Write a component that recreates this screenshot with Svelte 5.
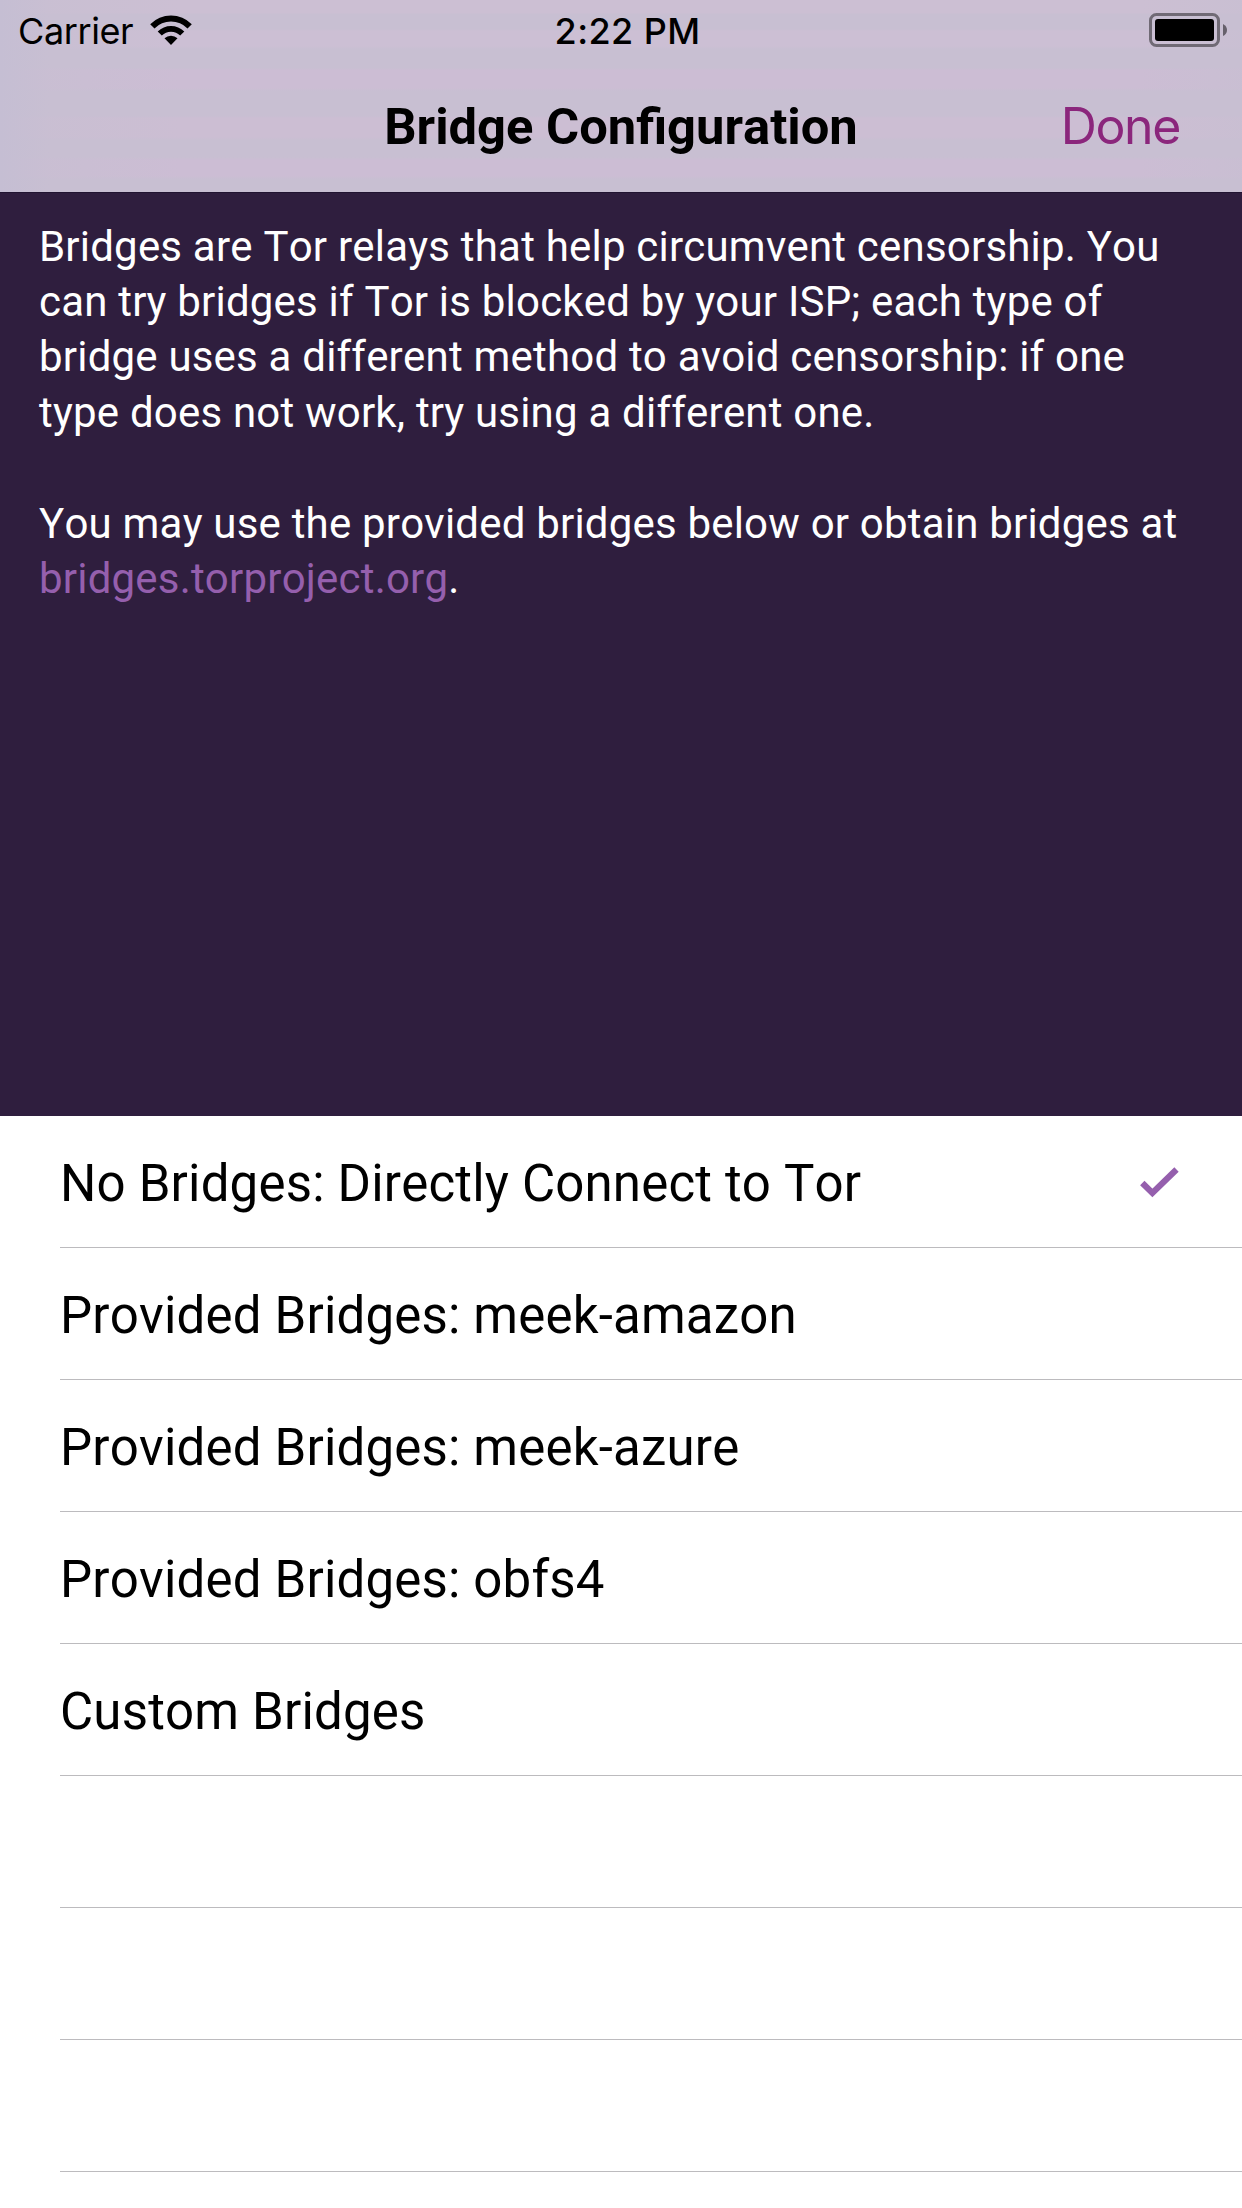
<script>
  const rows = ['No Bridges: Directly Connect to Tor', 'Provided Bridges: meek-amazon', 'Provided Bridges: meek-azure', 'Provided Bridges: obfs4', 'Custom Bridges', '', '', '', ''];
  const intro = ['Bridges are Tor relays that help circumvent censorship. You', 'can try bridges if Tor is blocked by your ISP; each type of', 'bridge uses a different method to avoid censorship: if one', 'type does not work, try using a different one.'];
</script>

<div class="screen">
  <header>
    <div class="status">
      <div class="left">
        <span class="carrier">Carrier</span>
        <svg class="wifi" width="42" height="30" viewBox="0 0 42 30"><path d="M21 30 14.5 23.3A9.4 9.4 0 0 1 27.5 23.3ZM7.7 16.4A19 19 0 0 1 34.3 16.4L30.2 20.6A13 13 0 0 0 11.8 20.6ZM.2 9.2A29.2 29.2 0 0 1 41.8 9.2L37.5 13.5A23 23 0 0 0 4.5 13.5Z" /></svg>
      </div>
      <span class="time">2:22 PM</span>
      <svg class="battery" width="78" height="34" viewBox="0 0 78 34"><rect x="1.5" y="1.5" width="68" height="31" rx="6" fill="none" stroke="#706a75" stroke-width="3" /><rect x="6" y="6" width="59" height="22" rx="3" /><path d="M74 11Q78 13 78 17T74 23Z" fill="#66606b" /></svg>
    </div>
    <div class="nav"><h1>Bridge Configuration</h1><span class="done">Done</span></div>
  </header>
  <section>
    {#each intro as line}<p>{line}</p>{/each}
    <p class="gap">You may use the provided bridges below or obtain bridges at</p>
    <p><a href="#bridges">bridges.torproject.org</a>.</p>
  </section>
  <ul>
    {#each rows as row, i}
      <li><span>{row}</span>{#if i === 0}<svg width="40" height="32" viewBox="0 0 40 32"><path d="M3.3 17 13.4 27 37.5 3.5" fill="none" stroke="#955fad" stroke-width="6.2" /></svg>{/if}</li>
    {/each}
  </ul>
</div>

<style>
  .screen { width: 1242px; height: 2208px; overflow: hidden; background: #fff; font-family: Roboto, sans-serif; }
  header {
    height: 192px;
    background:
      linear-gradient(90deg, #c5bed3 0, #c8bfd2b0 50px, transparent 180px, transparent 1140px, #c8bfd2b0 1242px),
      linear-gradient(#ccbfd3 0 13px, #c8bfd2 14px 29px, #ccbfd4 31px 46px, #c8bfd2 49px 68px, #ccbdd4 70px 88px, #c8bfd2 91px 116px, #ccbed3 118px 137px, #c8bfd2 140px 157px, #ccbdd4 160px 176px, #c8bfd2 179px);
    font-family: Inter, sans-serif;
  }
  .status { height: 60px; display: grid; grid-template-columns: 1fr auto 1fr; align-items: center; padding: 0 15px 0 18px; font-size: 36px; }
  .left { display: flex; align-items: center; gap: 17px; }
  .carrier { letter-spacing: -.4px; padding-top: 2px; }
  .time { font-weight: 500; letter-spacing: .4px; padding: 2px 0 0 10px; }
  .battery { justify-self: end; }
  .nav { height: 132px; display: grid; grid-template-columns: 1fr auto 1fr; align-items: center; padding: 0 62px; }
  h1 { grid-column: 2; margin: 0; font: 700 50.7px Roboto, sans-serif; font-kerning: none; }
  .done { justify-self: end; color: #8b267c; font-size: 50px; letter-spacing: -1.4px; }
  section { box-sizing: border-box; height: 924px; border-top: 1px solid #211431; padding: 25.6px 39px; background: #2f1e3e; color: #fff; font-size: 42px; letter-spacing: .2px; font-kerning: none; }
  p { margin: 0; line-height: 55.4px; white-space: nowrap; }
  .gap { margin-top: 55.4px; }
  a { color: #955fad; text-decoration: none; }
  ul { list-style: none; margin: 0; padding: 0 0 0 60px; }
  li { box-sizing: border-box; height: 132px; border-bottom: 1px solid #bcbbbe; display: flex; align-items: center; justify-content: space-between; padding-right: 63px; font-size: 51px; letter-spacing: .18px; font-kerning: none; }
  li span { padding-top: 4px; }
</style>
